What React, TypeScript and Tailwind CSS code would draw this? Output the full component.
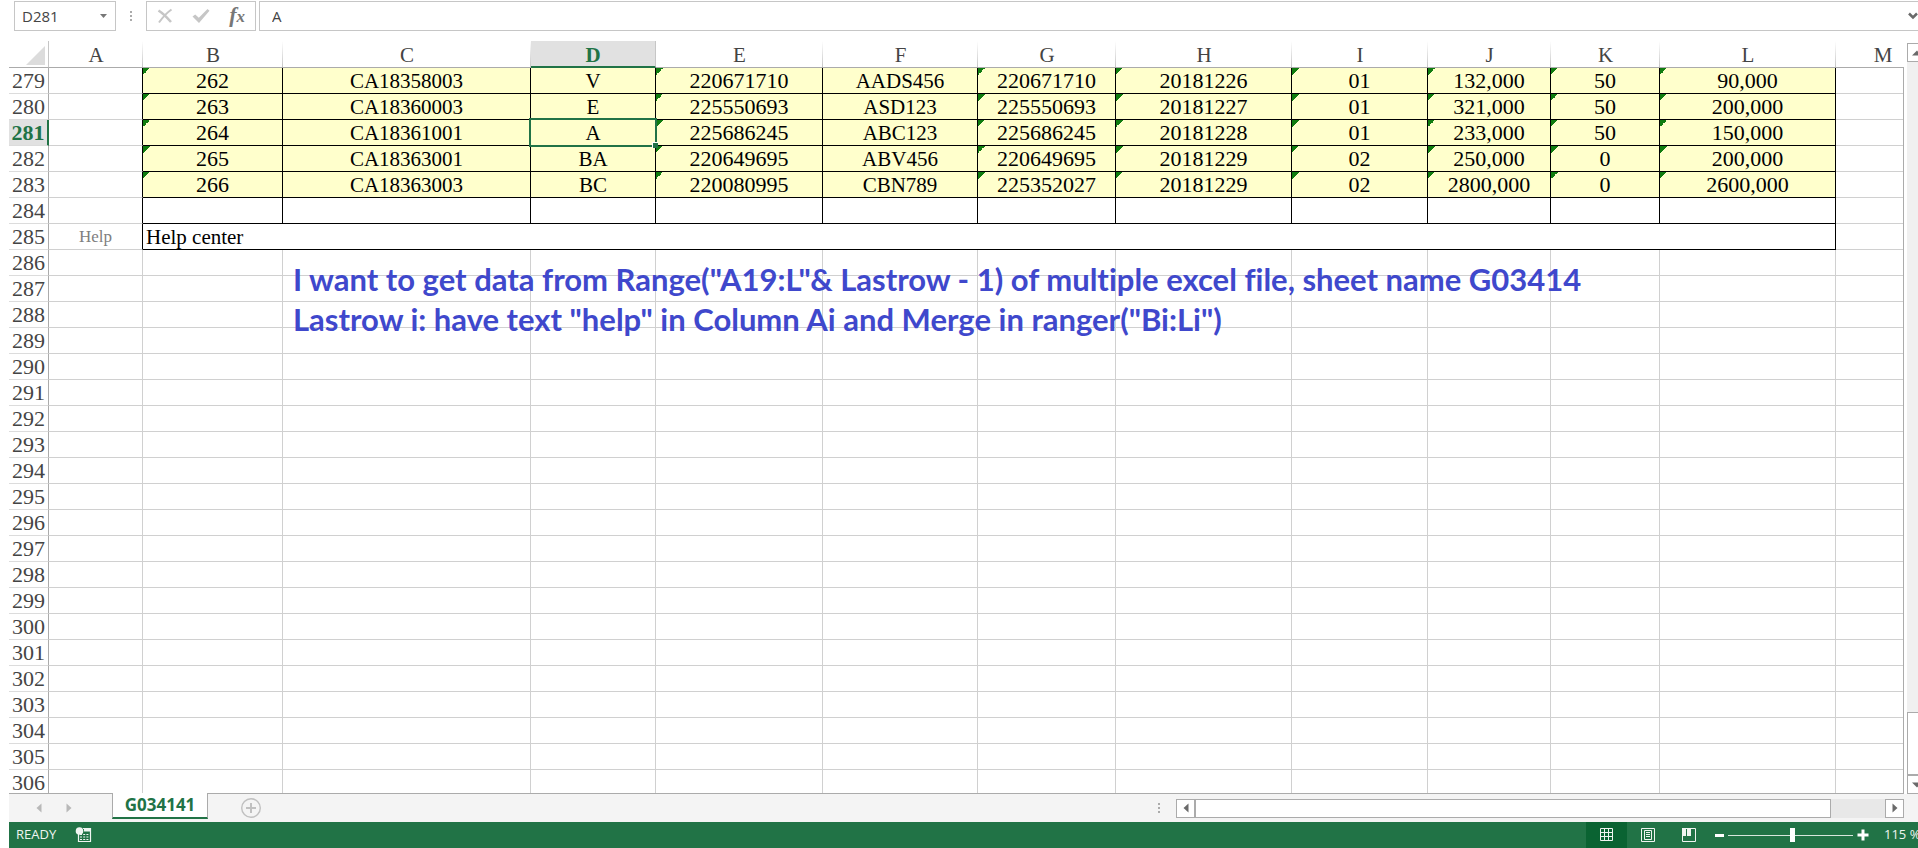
import React from "react";
import clsx from "clsx";

type Column = {
    name: string;
    width: string;
    text?: string;
    flagged?: boolean;
};

const columns: Column[] = [
    { name: "A", width: "w-[94px]" },
    { name: "B", width: "w-[140px]", text: "text-[22px]", flagged: true },
    { name: "C", width: "w-[248px]", text: "text-[21px]" },
    { name: "D", width: "w-[125px]", text: "text-[21px]" },
    { name: "E", width: "w-[167px]", text: "text-[22px]", flagged: true },
    { name: "F", width: "w-[155px]", text: "text-[21px]" },
    { name: "G", width: "w-[138px]", text: "text-[22px]", flagged: true },
    { name: "H", width: "w-[176px]", text: "text-[22px]", flagged: true },
    { name: "I", width: "w-[136px]", text: "text-[22px]", flagged: true },
    { name: "J", width: "w-[123px]", text: "text-[22px]", flagged: true },
    { name: "K", width: "w-[109px]", text: "text-[22px]", flagged: true },
    { name: "L", width: "w-[176px]", text: "text-[22px]", flagged: true },
    { name: "M", width: "" },
];

const dataColumns = columns.slice(1, 12);

const records: Record<number, string[]> = {
    279: ["262", "CA18358003", "V", "220671710", "AADS456", "220671710", "20181226", "01", "132,000", "50", "90,000"],
    280: ["263", "CA18360003", "E", "225550693", "ASD123", "225550693", "20181227", "01", "321,000", "50", "200,000"],
    281: ["264", "CA18361001", "A", "225686245", "ABC123", "225686245", "20181228", "01", "233,000", "50", "150,000"],
    282: ["265", "CA18363001", "BA", "220649695", "ABV456", "220649695", "20181229", "02", "250,000", "0", "200,000"],
    283: ["266", "CA18363003", "BC", "220080995", "CBN789", "225352027", "20181229", "02", "2800,000", "0", "2600,000"],
    284: ["", "", "", "", "", "", "", "", "", "", ""],
};

const FIRST_ROW = 279;
const rowNumbers = Array.from({ length: 28 }, (_, i) => FIRST_ROW + i);
const active = { row: 281, column: "D" };

const plainCell = "border-r border-b border-[#d0d0d0]";

const Triangle: React.FC<{ points: string; className?: string }> = ({ points, className }) => (
    <svg width="10" height="10" viewBox="0 0 10 10" className={clsx("shrink-0", className)} fill="currentColor" aria-hidden="true">
        <polygon points={points} />
    </svg>
);

const LEFT = "7.5,0.5 7.5,9.5 2.5,5";
const RIGHT = "2.5,0.5 2.5,9.5 7.5,5";
const UP = "0,7.5 10,7.5 5,2.5";
const DOWN = "0,2.5 10,2.5 5,7.5";

const Grip: React.FC = () => (
    <svg width="2" height="10" viewBox="0 0 2 10" fill="#ababab" className="shrink-0" aria-hidden="true">
        <rect width="2" height="2" />
        <rect y="4" width="2" height="2" />
        <rect y="8" width="2" height="2" />
    </svg>
);

const FormulaBar: React.FC = () => (
    <div className="flex h-[41px] shrink-0 items-start pt-px pl-[5px] font-['Open_Sans','Noto_Sans',sans-serif] text-[15px] text-[#444]">
        <div className="flex h-[30px] w-[102px] shrink-0 items-center border border-[#c6c6c6] pr-2 pl-[7px]">
            <input aria-label="Name box" defaultValue="D281" className="w-full min-w-0 flex-1 outline-none" />
            <svg width="7" height="4" viewBox="0 0 7 4" fill="#777" aria-hidden="true">
                <polygon points="0,0 7,0 3.5,4" />
            </svg>
        </div>
        <div className="flex h-[30px] w-[30px] shrink-0 items-center justify-center">
            <Grip />
        </div>
        <div className="flex h-[30px] w-[110px] shrink-0 items-center justify-between border border-[#c6c6c6] px-[10px]">
            <button aria-label="Cancel">
                <svg width="16" height="16" viewBox="0 0 16 16" fill="none" stroke="#c6c6c6" aria-hidden="true">
                    <path d="M1.5 2.5 Q7 6 14 14" strokeWidth="2.6" />
                    <path d="M14.5 1.5 Q8 6 2 14.5" strokeWidth="2" />
                </svg>
            </button>
            <button aria-label="Enter">
                <svg width="18" height="16" viewBox="0 0 18 16" fill="#c6c6c6" aria-hidden="true">
                    <path d="M0.5 8.5 L3.2 6.4 L6.8 9.8 L15.5 1 L17.5 2.8 L7 15 Z" />
                </svg>
            </button>
            <button aria-label="Insert function" className="font-['Liberation_Serif',serif] text-[22px] leading-[26px] font-bold text-[#777] italic">
                f<span className="text-[17px]">x</span>
            </button>
        </div>
        <div className="ml-[3px] flex h-[30px] min-w-0 flex-1 items-center overflow-hidden border-y border-l border-[#c6c6c6] pl-3">
            <input aria-label="Formula" defaultValue="A" className="min-w-0 flex-1 outline-none" />
            <svg width="10" height="8" viewBox="0 0 10 8" fill="none" stroke="#6a6a6a" strokeWidth="2.5" className="shrink-0" aria-hidden="true">
                <path d="M1 1.5 L5 5.5 L9 1.5" />
            </svg>
        </div>
    </div>
);

const SheetRow: React.FC<{ row: number }> = ({ row }) => {
    const record = records[row];
    const isActiveRow = row === active.row;
    const inFrame = row <= 285;

    return (
        <tr className="h-[26px] align-top *:pt-0.5">
            <th
                scope="row"
                className={clsx(
                    "border-r border-b border-b-[#dcdcdc] text-[22px]",
                    isActiveRow
                        ? "border-r-2 border-r-[#217346] bg-[#e1e1e1] font-bold text-[#217346]"
                        : "border-r-[#ababab] font-normal text-[#444]"
                )}
            >
                {row}
            </th>
            <td className={clsx("border-r border-b border-b-[#d0d0d0] text-[17px] text-[#808080]", inFrame ? "border-r-black" : "border-r-[#d0d0d0]")}>
                {row === 285 ? "Help" : null}
            </td>
            {record
                ? dataColumns.map((col, i) => (
                      <td
                          key={col.name}
                          className={clsx(
                              "relative border-r border-b border-black",
                              col.text,
                              record[i] && "bg-[#ffffcc]",
                              record[i] &&
                                  col.flagged &&
                                  "bg-[linear-gradient(135deg,#107c10_50%,transparent_50%)] bg-[length:7px_7px] bg-no-repeat"
                          )}
                      >
                          {record[i]}
                          {isActiveRow && col.name === active.column ? (
                              <span className="absolute -inset-0.5 z-10 border-2 border-[#217346]">
                                  <span className="absolute -right-[3px] -bottom-[3px] size-[6px] border-t border-l border-white bg-[#217346]" />
                              </span>
                          ) : null}
                      </td>
                  ))
                : null}
            {row === 285 ? (
                <td colSpan={11} className="border-r border-b border-black pl-[3px] text-left text-[21px]">
                    Help center
                </td>
            ) : null}
            {row > 285 ? dataColumns.map((col) => <td key={col.name} className={plainCell} />) : null}
            <td className={plainCell} />
        </tr>
    );
};

const Sheet: React.FC = () => (
    <div className="relative min-w-0 flex-1 overflow-hidden border-b border-[#ababab]">
        <table className="w-[1921px] min-w-full table-fixed border-separate border-spacing-0 text-center font-['Liberation_Serif',serif] leading-[22px] whitespace-nowrap text-black">
            <colgroup>
                <col className="w-[40px]" />
                {columns.map((col) => (
                    <col key={col.name} className={col.width} />
                ))}
            </colgroup>
            <thead>
                <tr className="h-[27px] align-top *:pt-[3px]">
                    <th aria-label="Select all" className="border-r border-b border-r-[#c6c6c6] border-b-[#ababab]">
                        <svg width="19" height="19" viewBox="0 0 19 19" className="mt-0.5 ml-[17px]" fill="#dcdcdc" aria-hidden="true">
                            <polygon points="19,0 19,19 0,19" />
                        </svg>
                    </th>
                    {columns.map((col) => (
                        <th
                            key={col.name}
                            scope="col"
                            className={clsx(
                                "text-[21px]",
                                col.name === active.column
                                    ? "border-r border-b-2 border-r-[#c6c6c6] border-b-[#217346] bg-[#e1e1e1] font-bold text-[#217346]"
                                    : "border-b border-[#ababab] bg-[linear-gradient(to_bottom,#ffffff,#c6c6c6)] bg-[length:1px_100%] bg-right bg-no-repeat font-normal text-[#444]"
                            )}
                        >
                            {col.name}
                        </th>
                    ))}
                </tr>
            </thead>
            <tbody>
                {rowNumbers.map((row) => (
                    <SheetRow key={row} row={row} />
                ))}
            </tbody>
        </table>
        <p className="absolute top-[218px] left-[284px] font-['Lato',sans-serif] text-[31px] leading-10 font-bold whitespace-nowrap text-[#3f48cc] [font-variant-ligatures:none]">
            I want to get data from Range("A19:L"&amp; Lastrow - 1) of multiple excel file, sheet name G03414
            <br />
            Lastrow i: have text "help" in Column Ai and Merge in ranger("Bi:Li")
        </p>
        <span className="absolute top-[26px] right-0 bottom-0 w-px bg-[#ababab]" />
    </div>
);

const VerticalScroll: React.FC = () => (
    <div className="flex w-[14px] shrink-0 flex-col overflow-hidden pt-0.5 pl-[3px] text-[#6a6a6a]">
        <button aria-label="Scroll up" className="flex h-[19px] w-[19px] shrink-0 items-center justify-center border border-[#ababab] bg-white">
            <Triangle points={UP} />
        </button>
        <div className="flex w-[19px] flex-1 flex-col justify-end bg-[#f0f0f0]">
            <div className="h-[63px] border border-[#ababab] bg-white" />
        </div>
        <button aria-label="Scroll down" className="flex h-[19px] w-[19px] shrink-0 items-center justify-center border border-[#ababab] bg-white">
            <Triangle points={DOWN} />
        </button>
    </div>
);

const TabBar: React.FC = () => (
    <div className="flex h-7 shrink-0 items-center bg-[#f4f4f4] pr-[14px]">
        <div className="flex w-[103px] shrink-0 items-center gap-5 pl-[25px] text-[#b8b8b8]">
            <button aria-label="Previous sheet">
                <Triangle points={LEFT} />
            </button>
            <button aria-label="Next sheet">
                <Triangle points={RIGHT} />
            </button>
        </div>
        <button className="relative -mt-px h-[26px] w-24 shrink-0 self-start border-x border-b-2 border-x-[#ababab] border-b-[#217346] bg-white font-['Noto_Sans',sans-serif] text-[17px] leading-[22px] font-bold text-[#217346]">
            G034141
        </button>
        <button aria-label="New sheet" className="ml-8">
            <svg width="22" height="22" viewBox="0 0 22 22" fill="none" stroke="#c0c0c0" aria-hidden="true">
                <circle cx="11" cy="11" r="9.3" strokeWidth="1.4" />
                <path d="M11 6 V16 M6 11 H16" strokeWidth="2" />
            </svg>
        </button>
        <div className="flex-1" />
        <Grip />
        <div className="ml-4 flex h-[19px] w-[728px] items-stretch bg-[#e8e8e8] text-[#6a6a6a]">
            <button aria-label="Scroll left" className="flex w-[19px] shrink-0 items-center justify-center border border-[#ababab] bg-white">
                <Triangle points={LEFT} />
            </button>
            <div className="flex-1 border border-[#ababab] bg-white" />
            <div className="w-[54px]" />
            <button aria-label="Scroll right" className="flex w-[19px] shrink-0 items-center justify-center border border-[#ababab] bg-white">
                <Triangle points={RIGHT} />
            </button>
        </div>
    </div>
);

const StatusBar: React.FC = () => (
    <div className="flex h-[26px] shrink-0 items-center overflow-hidden bg-[#217346] font-['Open_Sans','Noto_Sans',sans-serif] text-[13px] whitespace-nowrap text-[#f0f5f1]">
        <span className="w-[66px] pl-[7px]">READY</span>
        <button aria-label="Record macro">
            <svg width="17" height="16" viewBox="0 0 17 16" fill="none" aria-hidden="true">
                <path d="M3.5 7 V14.5 H15.5 V1.5 H8" stroke="#f0f5f1" strokeWidth="1.2" />
                <rect x="9" y="1" width="7" height="3.5" fill="#f0f5f1" />
                <circle cx="4.5" cy="4" r="3.8" fill="#f0f5f1" />
                <path d="M5 7.5 H14 M5 10 H14 M5 12.5 H14" stroke="#f0f5f1" strokeWidth="1.2" strokeDasharray="2 1.2" />
            </svg>
        </button>
        <div className="flex-1" />
        <button aria-label="Normal view" className="flex h-full w-[41px] shrink-0 items-center justify-center bg-[#0a6332]">
            <svg width="14" height="14" viewBox="0 0 14 14" fill="none" stroke="#f0f5f1" aria-hidden="true">
                <path d="M0.5 0.5 H12.5 V12.5 H0.5 Z M4.5 0 V13 M8.5 0 V13 M0 4.5 H13 M0 8.5 H13" />
            </svg>
        </button>
        <button aria-label="Page layout" className="flex h-full w-[41px] shrink-0 items-center justify-center">
            <svg width="14" height="14" viewBox="0 0 14 14" fill="none" stroke="#f0f5f1" aria-hidden="true">
                <path d="M0.5 0.5 H13.5 V13.5 H0.5 Z M3.5 2.5 H10.5 V11.5 H3.5 Z M5 4.5 H9 M5 6.5 H9 M5 8.5 H9" />
            </svg>
        </button>
        <button aria-label="Page break preview" className="flex h-full w-[41px] shrink-0 items-center justify-center">
            <svg width="14" height="14" viewBox="0 0 14 14" fill="none" aria-hidden="true">
                <path d="M0.5 0.5 H13.5 V13.5 H0.5 Z" stroke="#f0f5f1" />
                <path d="M0 0 H4 V8 H0 Z M5 0 H9 V8 H5 Z" fill="#f0f5f1" />
            </svg>
        </button>
        <button aria-label="Zoom out" className="ml-1.5 h-[3px] w-[9px] shrink-0 bg-white" />
        <input
            type="range"
            aria-label="Zoom"
            min={0}
            max={100}
            defaultValue={52}
            className="mx-1 h-4 w-[125px] shrink-0 appearance-none bg-[linear-gradient(#d8e6dd,#d8e6dd)] bg-[length:100%_1px] bg-center bg-no-repeat [&::-webkit-slider-thumb]:h-[14px] [&::-webkit-slider-thumb]:w-[5px] [&::-webkit-slider-thumb]:appearance-none [&::-webkit-slider-thumb]:bg-white"
        />
        <button aria-label="Zoom in" className="shrink-0">
            <svg width="12" height="12" viewBox="0 0 12 12" stroke="#fff" strokeWidth="3" aria-hidden="true">
                <path d="M6 0.5 V11.5 M0.5 6 H11.5" />
            </svg>
        </button>
        <span className="w-[49px] shrink-0 overflow-hidden pl-[15px]">115 %</span>
    </div>
);

const App: React.FC = () => {
    return (
        <div className="flex h-screen flex-col overflow-hidden bg-white pl-[9px]">
            <FormulaBar />
            <div className="flex min-h-0 flex-1">
                <Sheet />
                <VerticalScroll />
            </div>
            <TabBar />
            <StatusBar />
        </div>
    );
};

export default App;
